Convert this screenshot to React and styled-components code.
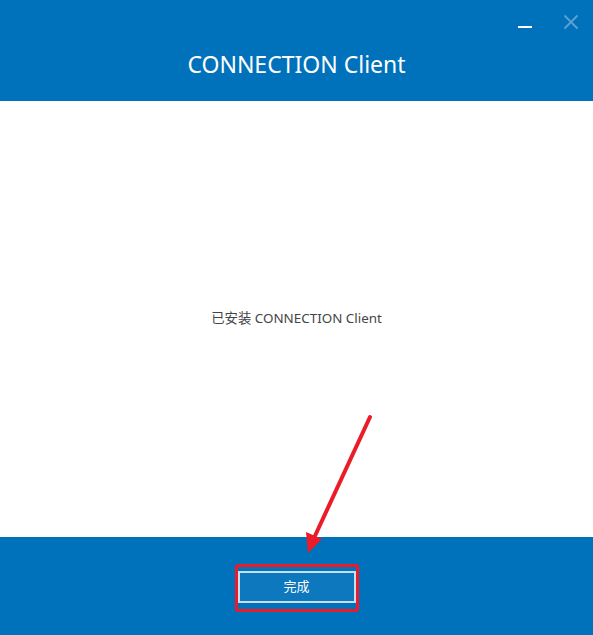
import React from "react";
import styled, { createGlobalStyle } from "styled-components";

const Global = createGlobalStyle`
  html, body { margin: 0; padding: 0; background: #ffffff; }
  body { font-family: "Noto Sans", "Noto Sans CJK SC", sans-serif; }
`;

const Window = styled.div`
  position: relative;
  width: 593px;
  height: 635px;
  display: flex;
  flex-direction: column;
  background: #ffffff;
  overflow: hidden;
`;

const Header = styled.header`
  position: relative;
  height: 101px;
  box-sizing: border-box;
  padding-top: 48px;
  background: #0071bb;
  display: flex;
  align-items: flex-start;
  justify-content: center;
`;

const Title = styled.h1`
  margin: 0;
  color: #ffffff;
  font-family: "Noto Sans", sans-serif;
  font-weight: 400;
  font-size: 23px;
  line-height: 32px;
`;

const Controls = styled.div`
  position: absolute;
  top: 10px;
  right: 10px;
  display: flex;
  gap: 22px;
  align-items: center;
`;

const CtrlBtn = styled.div`
  width: 24px;
  height: 24px;
  display: flex;
  align-items: center;
  justify-content: center;
`;

const Body = styled.main`
  flex: 1;
  display: flex;
  align-items: center;
  justify-content: center;
`;

const Message = styled.p`
  margin: 0;
  margin-top: -4px;
  color: #454545;
  font-size: 13.4px;
  font-family: "Noto Sans", "Noto Sans CJK SC", sans-serif;
`;

const Footer = styled.footer`
  height: 98px;
  background: #0071bb;
  display: flex;
  justify-content: center;
  align-items: flex-start;
  padding-top: 34px;
  box-sizing: border-box;
`;

const ButtonWrap = styled.div`
  position: relative;
`;

const FinishButton = styled.button`
  width: 118px;
  height: 32px;
  box-sizing: border-box;
  border: 2px solid #c9dff0;
  background: #0d78bd;
  color: #ffffff;
  font-family: "Noto Sans CJK SC", sans-serif;
  font-size: 13px;
  line-height: 26px;
  padding: 0 0 3px 0;
  margin: 0;
  display: block;
`;

const Highlight = styled.div`
  position: absolute;
  left: -3px;
  right: -3px;
  top: -7px;
  bottom: -9px;
  border: 3px solid #ea1c2a;
  border-radius: 3px;
  pointer-events: none;
`;

const Arrow = styled.svg`
  position: absolute;
  left: 0;
  top: 0;
  pointer-events: none;
`;

export default function App() {
  return (
    <>
      <Global />
      <Window>
        <Header>
          <Title>CONNECTION Client</Title>
          <Controls>
            <CtrlBtn>
              <svg width="16" height="24" viewBox="0 0 16 24">
                <rect x="1" y="16" width="14" height="2" fill="#ffffff" />
              </svg>
            </CtrlBtn>
            <CtrlBtn>
              <svg width="16" height="16" viewBox="0 0 16 16">
                <path d="M1.5 1.5 L14.5 14.5 M14.5 1.5 L1.5 14.5" stroke="#5f9fd2" strokeWidth="1.8" fill="none" />
              </svg>
            </CtrlBtn>
          </Controls>
        </Header>
        <Body>
          <Message>已安装 CONNECTION Client</Message>
        </Body>
        <Footer>
          <ButtonWrap>
            <FinishButton>完成</FinishButton>
            <Highlight />
          </ButtonWrap>
        </Footer>
        <Arrow width="593" height="635" viewBox="0 0 593 635">
          <line x1="370" y1="417" x2="314" y2="538" stroke="#ea1c2a" strokeWidth="4" strokeLinecap="round" />
          <polygon points="308,553 306,532 322,539" fill="#ea1c2a" />
        </Arrow>
      </Window>
    </>
  );
}
